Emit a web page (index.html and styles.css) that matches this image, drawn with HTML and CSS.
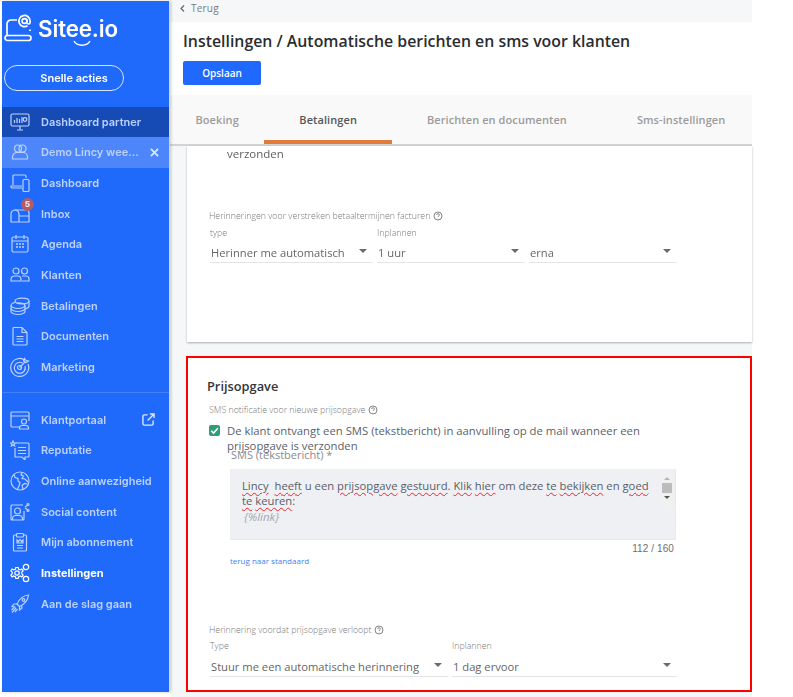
FILE: index.html
```html
<!DOCTYPE html>
<html lang="nl">
<head>
<meta charset="utf-8">
<title>Instellingen</title>
<link rel="stylesheet" href="styles.css">
</head>
<body>
<div class="app">
  <aside class="sidebar">
    <div class="logo">
      <svg class="logo-icon" viewBox="0 0 28 30"><path d="M3 21V10a4 4 0 0 1 4-4h6"/><rect x="1" y="21.500" width="26" height="5" rx="2.500"/><circle cx="20.500" cy="7" r="2.400"/><path d="M22.900 5v3.400a1.600 1.600 0 0 0 3.200 0V7a5.600 5.600 0 1 0-2.600 4.800"/><path d="M26 15.500V17"/></svg>
      <span class="logo-text">Sitee.io</span>
      <svg class="logo-smile" viewBox="0 0 18 6"><path d="M1 1c3 5.500 13 5.500 16 0"/></svg>
    </div>
    <button class="quick">Snelle acties</button>
    <nav class="nav">
      <a class="item partner"><svg class="ico" viewBox="0 0 20 20"><rect x="1" y="2" width="18" height="12" rx="1.500"/><path d="M7 18h6M10 14v4M4.500 11V8M7 11V6M9.500 11V7M12 11V5"/><circle cx="15" cy="7.500" r="1.800"/></svg><span>Dashboard partner</span></a>
      <a class="item demo"><svg class="ico" viewBox="0 0 20 20"><circle cx="8" cy="6.500" r="3.500"/><circle cx="12.500" cy="6.500" r="3.500"/><path d="M2.500 17v-2a4.500 4.500 0 0 1 4.500-4.500h6a4.500 4.500 0 0 1 4.500 4.500v2z"/></svg><span class="grow">Demo Lincy wee...</span><svg class="close" viewBox="0 0 10 10"><path d="M1 1l8 8M9 1l-8 8"/></svg></a>
      <a class="item"><svg class="ico" viewBox="0 0 20 20"><path d="M3 12V3a1 1 0 0 1 1-1h11a1 1 0 0 1 1 1v2M12 13H1v.800A1.200 1.200 0 0 0 2.200 15H12"/><rect x="13" y="6.500" width="6" height="12" rx="1"/></svg><span>Dashboard</span></a>
      <a class="item inbox"><svg class="ico" viewBox="0 0 20 20"><path d="M1 18V10a4 4 0 0 1 4-4h11a3 3 0 0 1 3 3v9z"/><path d="M9 18v-8a4 4 0 0 0-4-4M9 12h10"/></svg><span>Inbox</span><b class="badge">5</b></a>
      <a class="item"><svg class="ico" viewBox="0 0 20 20"><rect x="2" y="3" width="16" height="15" rx="1.500"/><path d="M2 7h16M6 1v4M14 1v4"/><path class="dots" d="M6 10h2M9 10h2M12 10h2M6 13h2M9 13h2M12 13h2"/></svg><span>Agenda</span></a>
      <a class="item"><svg class="ico" viewBox="0 0 20 20"><circle cx="6" cy="6" r="3"/><circle cx="14.500" cy="6" r="3"/><path d="M1 16v-1.500A3.500 3.500 0 0 1 4.500 11h3a3.500 3.500 0 0 1 3.500 3.500V16zM12 11h4a3 3 0 0 1 3 3v2h-7"/></svg><span>Klanten</span></a>
      <a class="item"><svg class="ico" viewBox="0 0 20 20"><ellipse cx="12" cy="5" rx="7" ry="2.800"/><path d="M19 5v5c0 1.200-1.500 2.200-3.500 2.600M5 6.500C2.800 7 1 8 1 9.500v6C1 17 4 18.500 8 18.500s7-1.500 7-3v-6C15 8 12 6.800 8 6.800"/><path d="M1 9.500c0 1.500 3 3 7 3s7-1.500 7-3M1 12.500c0 1.500 3 3 7 3s7-1.500 7-3"/></svg><span>Betalingen</span></a>
      <a class="item"><svg class="ico" viewBox="0 0 20 20"><path d="M4 1.500h8l5 5V18a1 1 0 0 1-1 1H4a1 1 0 0 1-1-1V2.500a1 1 0 0 1 1-1z"/><path d="M12 1.500v5h5M6.500 10.500h7M6.500 13h7M6.500 15.500h7"/></svg><span>Documenten</span></a>
      <a class="item"><svg class="ico" viewBox="0 0 20 20"><path d="M15 3.200A9 9 0 1 0 18 7"/><path d="M12.500 6a5.500 5.500 0 1 0 2.500 3"/><circle cx="9.500" cy="10.500" r="2"/><path d="M9.500 10.500L15 5M13.500 4l1-2.500 1.500 2 2.500.5-2.500 1.500z"/></svg><span>Marketing</span></a>
      <div class="divider"></div>
      <a class="item"><svg class="ico" viewBox="0 0 20 20"><path d="M10 17H2a1 1 0 0 1-1-1V3a1 1 0 0 1 1-1h16a1 1 0 0 1 1 1v8M1 6h18"/><circle cx="14" cy="11.500" r="2.500"/><path d="M9.500 19v-1a2.500 2.500 0 0 1 2.500-2.500h4a2.500 2.500 0 0 1 2.500 2.500v1z"/></svg><span class="grow">Klantportaal</span><svg class="ext" viewBox="0 0 14 14"><path d="M6 2H2.500A1.500 1.500 0 0 0 1 3.500v8A1.500 1.500 0 0 0 2.500 13h8a1.500 1.500 0 0 0 1.500-1.500V8M6 8l7-7M8.500 1H13v4.500"/></svg></a>
      <a class="item"><svg class="ico" viewBox="0 0 20 20"><path d="M6 3h12a1 1 0 0 1 1 1v12a1 1 0 0 1-1 1h-3v3l-3-3H5V8"/><path d="M8 7.500h8M8 10.500h8M8 13.500h8"/><path d="M3 1l.7 1.800 1.800.2-1.400 1.200.5 1.800L3 5l-1.600 1 .5-1.800L.5 3l1.800-.2z"/></svg><span>Reputatie</span></a>
      <a class="item"><svg class="ico" viewBox="0 0 20 20"><circle cx="10" cy="10" r="9"/><path d="M4 3.500l1 3 3 1v2.500l2 1.500-1 3.500-1.500 3M12 1.500L11 4l2.500 1-1.500 2.500 3 .5 3 3M13 18l-1-3.500 2.500-2 3 .5"/></svg><span>Online aanwezigheid</span></a>
      <a class="item"><svg class="ico" viewBox="0 0 20 20"><path d="M13 3H2a1 1 0 0 0-1 1v13a1 1 0 0 0 1 1h11a1 1 0 0 0 1-1V9"/><circle cx="7.500" cy="9" r="3"/><path d="M2.500 18v-1.500A3 3 0 0 1 5.500 13.500h4a3 3 0 0 1 3 3V18M15 5l3-2M15 6l3 2"/><circle cx="18" cy="2.500" r="1"/><circle cx="18" cy="8.500" r="1"/></svg><span>Social content</span></a>
      <a class="item"><svg class="ico" viewBox="0 0 20 20"><path d="M6.500 3H4.500a1 1 0 0 0-1 1v14a1 1 0 0 0 1 1h11a1 1 0 0 0 1-1V4a1 1 0 0 0-1-1h-2"/><rect x="6.500" y="1.500" width="7" height="3.500" rx="1"/><path d="M7 8l1.500 1.500L10 7.500l1.500 2L13 8v3H7zM7 13.500h6M7 16h6"/></svg><span>Mijn abonnement</span></a>
      <a class="item active"><svg class="ico" viewBox="0 0 20 20"><circle cx="7" cy="10" r="2.200"/><path d="M5.800 4.500h2.400l.5 1.700 1.600.7 1.600-.9 1.200 1.900-1.300 1.200v1.700l1.300 1.200-1.200 1.900-1.600-.9-1.600.7-.5 1.700H5.800l-.5-1.700-1.600-.7-1.600.9-1.200-1.900 1.300-1.200V9.100L.9 7.900l1.200-1.900 1.600.9 1.600-.7z"/><circle cx="16" cy="4" r="2.700"/><circle cx="16" cy="16" r="2.700"/></svg><span>Instellingen</span></a>
      <a class="item"><svg class="ico" viewBox="0 0 20 20"><path d="M18.500 1c-5 .5-9 3.500-11.500 9l2.500 2.500c5.500-2.500 8.500-6.500 9-11.500z"/><circle cx="13.500" cy="6" r="1.300"/><path d="M7 10H4l-2 2.500 3.500.5M9.500 12.500V16l2.500-2-.5-3M6 14l-4 4.500M4.500 13L1.500 16M7.500 15L5 18"/></svg><span>Aan de slag gaan</span></a>
    </nav>
  </aside>
  <main class="main">
    <div class="topbar"><svg class="chev" viewBox="0 0 5 7"><path d="M4 .5L1 3.500 4 6.500"/></svg>Terug</div>
    <header class="head">
      <h1>Instellingen / Automatische berichten en sms voor klanten</h1>
      <button class="save">Opslaan</button>
    </header>
    <div class="tabs">
      <a class="tab first">Boeking</a>
      <a class="tab on">Betalingen</a>
      <a class="tab">Berichten en documenten</a>
      <a class="tab">Sms-instellingen</a>
    </div>
    <div class="scroll">
      <section class="panel">
        <p class="orphan">verzonden</p>
        <div class="lab help-row">Herinneringen voor verstreken betaaltermijnen facturen <svg class="q" viewBox="0 0 10 10"><circle cx="5" cy="5" r="4"/><path d="M3.700 4a1.300 1.300 0 1 1 1.800 1.200c-.4.200-.5.400-.5.800M5 7.300v.2"/></svg></div>
        <div class="row three">
          <div class="field"><div class="lab">type</div><div class="sel"><span>Herinner me automatisch</span><i class="arr"></i></div></div>
          <div class="field"><div class="lab">Inplannen</div><div class="sel"><span>1 uur</span><i class="arr"></i></div></div>
          <div class="field"><div class="lab">&nbsp;</div><div class="sel"><span>erna</span><i class="arr"></i></div></div>
        </div>
      </section>
      <section class="card">
        <h2>Prijsopgave</h2>
        <div class="lab help-row">SMS notificatie voor nieuwe prijsopgave <svg class="q" viewBox="0 0 10 10"><circle cx="5" cy="5" r="4"/><path d="M3.700 4a1.300 1.300 0 1 1 1.800 1.200c-.4.200-.5.400-.5.800M5 7.300v.2"/></svg></div>
        <div class="check">
          <span class="box"><svg viewBox="0 0 10 10"><path d="M2 5.200l2.200 2.200L8 3"/></svg></span>
          <span class="check-text">De klant ontvangt een SMS (tekstbericht) in aanvulling op de mail wanneer een prijsopgave is verzonden</span>
        </div>
        <div class="sms-label">SMS (tekstbericht) *</div>
        <div class="area">
          <div class="area-text"><span class="sp">Lincy</span>&nbsp; <span class="sp">heeft</span> u een <span class="sp">prijsopgave</span> <span class="sp">gestuurd</span>. <span class="sp">Klik</span> <span class="sp">hier</span> om deze <span class="sp">te</span> <span class="sp">bekijken</span> en <span class="sp">goed</span> <span class="sp">te</span> <span class="sp">keuren</span>:<em>{%link}</em></div>
          <div class="sbar"><i class="up"></i><b></b><i class="down"></i></div>
        </div>
        <div class="count">112 / 160</div>
        <a class="reset">terug naar standaard</a>
        <div class="lab help-row late">Herinnering voordat prijsopgave verloopt <svg class="q" viewBox="0 0 10 10"><circle cx="5" cy="5" r="4"/><path d="M3.700 4a1.300 1.300 0 1 1 1.800 1.200c-.4.200-.5.400-.5.800M5 7.300v.2"/></svg></div>
        <div class="row two">
          <div class="field"><div class="lab">Type</div><div class="sel"><span>Stuur me een automatische herinnering</span><i class="arr"></i></div></div>
          <div class="field"><div class="lab">Inplannen</div><div class="sel"><span>1 dag ervoor</span><i class="arr"></i></div></div>
        </div>
      </section>
    </div>
  </main>
</div>
</body>
</html>
```

FILE: styles.css
```css
* { box-sizing: border-box; }
html, body { margin: 0; height: 100%; background: #fff; overflow: hidden; }
body { font-family: "Open Sans", "Liberation Sans", sans-serif; color: #555; }
a { display: block; }

.app { display: flex; width: 793px; height: 697px; filter: blur(.3px); }

/* Sidebar */
.sidebar { width: 167px; height: 691px; margin: 1px 0 0 2px; background: #1f69fb; box-shadow: 2px 0 3px rgba(0,0,0,.2); flex: none; font-family: "Inter", "Liberation Sans", sans-serif; display: flex; flex-direction: column; position: relative; }
.logo { position: relative; height: 56px; padding: 13px 0 0 2px; display: flex; align-items: flex-start; gap: 6px; }
.logo-icon { width: 28px; height: 30px; fill: none; stroke: #fff; stroke-width: 1.700; }
.logo-text { color: #fff; font-size: 22.300px; font-weight: 600; line-height: 30px; letter-spacing: -.1px; }
.logo-smile { position: absolute; left: 71px; top: 39px; width: 18px; height: 6px; fill: none; stroke: #fff; stroke-width: 1.500; }
.quick { width: 120px; height: 26px; margin: 8px 0 15.500px 2px; border: 1px solid #d8e4ff; border-radius: 13px; background: transparent; color: #fff; font: 600 11px "Inter", "Liberation Sans", sans-serif; padding: 0 0 0 20px; }
.nav { display: flex; flex-direction: column; }
.item { position: relative; display: flex; align-items: center; gap: 11px; height: 30.660px; padding: 0 14px 0 8px; color: #bdd1fc; font-size: 11px; font-weight: 600; white-space: nowrap; }
.item.partner { background: #164bb5; }
.item.demo { background: #4d86fb; }
.item.active { color: #fff; font-weight: 700; }
.grow { flex: 1; }
.ico { width: 20px; height: 20px; flex: none; fill: none; stroke: currentColor; stroke-width: 1.200; }
.active .ico { stroke: #fff; }
.dots { stroke-width: 1.600; }
.close { width: 9px; height: 9px; flex: none; fill: none; stroke: #dbe6ff; stroke-width: 2; }
.ext { width: 13px; height: 13px; flex: none; fill: none; stroke: #dbe6ff; stroke-width: 1.500; }
.badge { position: absolute; left: 19px; top: 0; width: 13px; height: 13px; border-radius: 50%; background: #b35b66; color: #e9dcdc; font-size: 8px; line-height: 13px; text-align: center; }
.divider { height: 1px; background: #4480fb; margin: 10px 0 11px; }

/* Main */
.main { width: 582px; margin-left: 1px; flex: none; display: flex; flex-direction: column; height: 697px; }
.topbar { height: 22px; background: #f6f7f9; padding: 0 0 0 10px; font-size: 10px; line-height: 17px; color: #777b80; letter-spacing: .2px; display: flex; align-items: flex-start; }
.chev { width: 5px; height: 7px; margin: 5px 6px 0 0; fill: none; stroke: #666; stroke-width: 1.200; flex: none; }
.head { height: 73px; padding: 9px 0 0 13px; background: #fff; }
h1 { margin: 0; font-size: 15.860px; font-weight: 600; line-height: 20px; color: #2a2d30; white-space: nowrap; }
.save { display: block; width: 78px; height: 24px; margin-top: 10px; border: 0; border-radius: 2px; background: #1f69ff; color: #fff; font: 600 10px "Open Sans", sans-serif; }
.tabs { height: 51px; display: flex; background: #f9f9f9; border-bottom: 2px solid #d3d3d3; overflow: hidden; flex: none; }
.tab { padding: 0 35px; line-height: 49px; height: 50px; font-size: 11px; font-weight: 600; color: #9b9b9b; white-space: nowrap; letter-spacing: .08px; }
.tab.first { padding: 0 25.500px; }
.tab.on { color: #55585a; border-bottom: 4px solid #e07b39; height: 49px; }

.scroll { flex: 1; min-height: 0; background: #f6f7f9; padding-left: 17px; }
.panel { height: 196px; background: #fff; padding: 1px 0 0 22px; box-shadow: 0 1px 2px rgba(0,0,0,.3); position: relative; }
.orphan { margin: 0 0 0 18px; font-size: 11.500px; line-height: 14px; color: #5c5f63; }
.lab { font-size: 8.800px; font-weight: 300; line-height: 12px; color: #777; white-space: nowrap; }
.panel .help-row { margin-top: 49px; }
.q { width: 10px; height: 10px; fill: none; stroke: #666; stroke-width: .8; vertical-align: -2px; }
.row { display: grid; margin-top: 5px; }
.three { grid-template-columns: 163px 148px 148px; column-gap: 4px; margin-left: 1px; }
.two { grid-template-columns: 238px 225px; column-gap: 4px; margin: 4px 0 0 1px; }
.sel { display: flex; align-items: center; justify-content: space-between; height: 22px; margin-top: 2px; padding: 2px 6px 0 1px; border-bottom: 1px solid #e4e4e4; font-size: 11.200px; color: #666; white-space: nowrap; }
.two .sel { margin-top: 3px; padding-top: 1px; }
.arr { width: 0; height: 0; border: 4px solid transparent; border-top: 4px solid #6b6b6b; border-bottom: 0; margin-bottom: 3px; }

.card { height: 336px; margin: 14px 0 0 -1px; background: #fff; border: 2px solid #f00; padding: 19px 0 0 21px; position: relative; }
h2 { margin: 0 0 0 -2px; font-size: 12.800px; font-weight: 600; line-height: 18px; color: #33363a; }
.card .help-row { margin-top: 9px; }
.card .help-row.late { margin-top: 57px; }
.check { display: flex; gap: 7px; margin-top: 7px; align-items: flex-start; width: 440px; }
.box { width: 11px; height: 11px; margin-top: 2px; border-radius: 2px; background: #2f9e74; flex: none; }
.box svg { display: block; fill: none; stroke: #fff; stroke-width: 1.500; }
.check-text { font-size: 11.300px; line-height: 15px; color: #5b5f6b; }
.sms-label { margin: -4px 0 8px 22px; font-size: 11px; line-height: 12px; color: #8b8b8b; }
.area { position: relative; height: 71px; width: 446px; margin: 0 0 0 21px; background: #eff0f4; border-right: 1px solid #e8e9ed; border-bottom: 1px solid #e8e9ed; padding: 8.500px 14px 0 12px; }
.area-text { font-size: 11.250px; line-height: 15px; color: #5a5e68; }
.area-text em { display: block; margin: 1px 0 0 2px; font-size: 11.500px; color: #a5a7ab; }
.sp { text-decoration: underline wavy #f0222a; text-decoration-thickness: 1px; text-underline-offset: 2px; }
.sbar { position: absolute; right: 2px; top: 3px; width: 12px; height: 33px; background: #f1f1f1; display: flex; flex-direction: column; align-items: center; gap: 3px; padding-top: 5px; }
.sbar b { width: 10px; height: 10px; background: #bdbdbd; }
.up, .down { width: 0; height: 0; border: 3px solid transparent; }
.up { border-bottom: 3px solid #b5b5b5; border-top: 0; }
.down { border-top: 3px solid #555; border-bottom: 0; }
.count { width: 465px; margin-top: 3px; text-align: right; font: 10px/12px "Liberation Sans", sans-serif; color: #6f6f6f; letter-spacing: .1px; }
.reset { margin: 0 0 0 21px; font-size: 8px; line-height: 12px; color: #3f82fa; }
```
